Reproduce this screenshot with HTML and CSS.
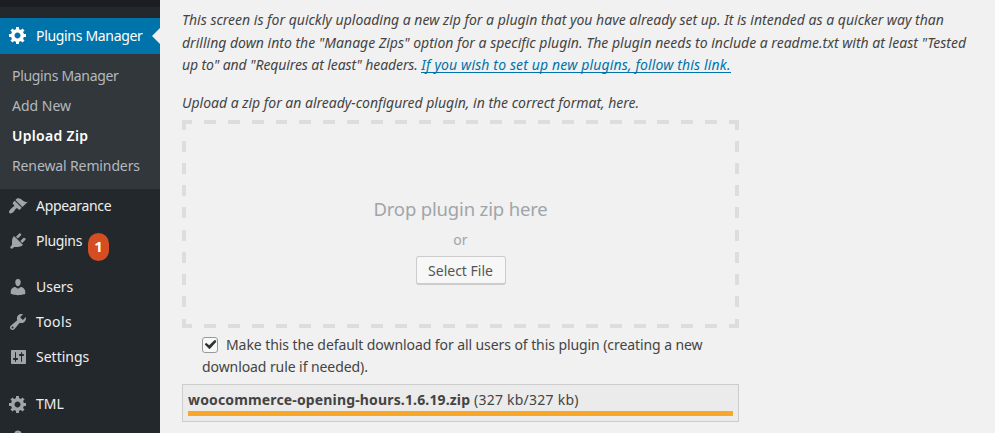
FILE: index.html
```html
<!DOCTYPE html>
<html lang="en">
<head>
<meta charset="utf-8">
<title>Upload Zip</title>
<link rel="stylesheet" href="styles.css">
</head>
<body>
<svg class="defs" width="0" height="0" aria-hidden="true">
  <symbol id="gear" viewBox="0 0 20 20"><path d="M18 12h-2.18c-.17.7-.44 1.35-.81 1.93l1.54 1.54-2.1 2.1-1.54-1.54c-.58.36-1.23.63-1.91.79V19H8v-2.18c-.68-.16-1.33-.43-1.91-.79l-1.54 1.54-2.12-2.12 1.54-1.54c-.36-.58-.63-1.23-.79-1.91H1V9.03h2.17c.16-.7.44-1.35.8-1.94L2.43 5.55l2.1-2.1 1.54 1.54c.58-.37 1.24-.64 1.93-.81V2h3v2.18c.68.16 1.33.43 1.91.79l1.54-1.54 2.12 2.12-1.54 1.54c.36.59.64 1.24.8 1.94H18V12zm-8.5 1.5c1.66 0 3-1.34 3-3s-1.34-3-3-3-3 1.34-3 3 1.34 3 3 3z"/></symbol>
</svg>
<div class="screen">
  <nav class="sidebar">
    <div class="topbar"></div>
    <a class="item current"><svg class="icon"><use href="#gear"/></svg><span class="t-pm">Plugins Manager</span></a>
    <div class="submenu">
      <a class="t-pm">Plugins Manager</a>
      <a>Add New</a>
      <a class="active">Upload Zip</a>
      <a class="t-ren">Renewal Reminders</a>
    </div>
    <a class="item"><svg class="icon" viewBox="0 0 20 20"><path d="M14.48 11.06L7.41 3.99l1.5-1.5c.5-.56 2.3-.47 3.51.32 1.21.8 1.43 1.28 2.91 2.1 1.18.64 2.45 1.26 4.45.85zm-.71.71L6.7 4.7 4.93 6.47c-.39.39-.39 1.02 0 1.41l1.06 1.06c.39.39.39 1.03 0 1.42-.6.6-1.43 1.11-2.21 1.69-.35.26-.7.53-1.01.84C1.43 14.23.4 16.08 1.4 17.07c.99 1 2.84-.03 4.18-1.36.31-.31.58-.66.85-1.02.57-.78 1.08-1.61 1.69-2.21.39-.39 1.02-.39 1.41 0l1.06 1.06c.39.39 1.02.39 1.41 0z"/></svg><span class="t-pm">Appearance</span></a>
    <a class="item"><svg class="icon" viewBox="0 0 20 20"><path d="M13.11 4.36L9.87 7.6 8 5.73l3.24-3.24c.35-.34 1.05-.2 1.56.32.52.51.66 1.21.31 1.55zm-8 1.77l.91-1.12 9.01 9.01-1.19.84c-.71.71-2.63 1.16-3.82 1.16H6.14L4.9 17.26c-.59.59-1.54.59-2.12 0-.59-.58-.59-1.53 0-2.12l1.24-1.24v-3.88c0-1.13.4-3.19 1.09-3.89zm7.26 3.97l3.24-3.24c.34-.35 1.04-.21 1.55.31.52.51.66 1.21.31 1.55l-3.24 3.25z"/></svg><span class="t-pm">Plugins</span><b class="badge">1</b></a>
    <a class="item users"><svg class="icon" viewBox="0 0 20 20"><path d="M10 9.25c-2.27 0-2.73-3.44-2.73-3.44C7 4.02 7.82 2 9.97 2c2.16 0 2.98 2.02 2.71 3.81 0 0-.41 3.44-2.68 3.44zm0 2.57L12.72 10c2.39 0 4.52 2.33 4.52 4.53v2.49s-3.65 1.13-7.24 1.13c-3.65 0-7.24-1.13-7.24-1.13v-2.49c0-2.25 1.94-4.48 4.47-4.48z"/></svg><span>Users</span></a>
    <a class="item"><svg class="icon" viewBox="0 0 20 20"><path d="M16.68 9.77c-1.34 1.34-3.3 1.67-4.95.99l-5.41 6.52c-.99.99-2.59.99-3.58 0s-.99-2.59 0-3.57l6.52-5.42c-.68-1.65-.35-3.61.99-4.95 1.28-1.28 3.12-1.62 4.72-1.06l-2.89 2.89 2.82 2.82 2.86-2.87c.53 1.58.18 3.39-1.08 4.65zM3.81 16.21c.4.39 1.04.39 1.43 0 .4-.4.4-1.04 0-1.43-.39-.4-1.03-.4-1.43 0-.39.39-.39 1.03 0 1.43z"/></svg><span class="t-tools">Tools</span></a>
    <a class="item"><svg class="icon" viewBox="0 0 20 20"><path d="M18 16V4c0-.55-.45-1-1-1H4c-.55 0-1 .45-1 1v12c0 .55.45 1 1 1h13c.55 0 1-.45 1-1zM8 11h1c.55 0 1 .45 1 1s-.45 1-1 1H8v1.5c0 .28-.22.5-.5.5s-.5-.22-.5-.5V13H6c-.55 0-1-.45-1-1s.45-1 1-1h1V5.500c0-.28.22-.5.5-.5s.5.22.5.5V11zm5-2h-1c-.55 0-1-.45-1-1s.45-1 1-1h1V5.500c0-.28.22-.5.5-.5s.5.22.5.5V7h1c.55 0 1 .45 1 1s-.45 1-1 1h-1v5.500c0 .28-.22.5-.5.5s-.5-.22-.5-.5V9z"/></svg><span>Settings</span></a>
    <a class="item tml"><svg class="icon"><use href="#gear"/></svg><span>TML</span></a>
    <a class="item"><svg class="icon" viewBox="0 0 20 20"><path fill-rule="evenodd" d="M10 1.500a3.700 3.700 0 0 1 3.700 3.700V9H15v8H5V9h1.300V5.200A3.700 3.700 0 0 1 10 1.500zm0 2.300a1.500 1.500 0 0 0-1.500 1.500V9h3V5.300A1.500 1.500 0 0 0 10 3.800z"/></svg></a>
  </nav>
  <main>
    <p class="intro">This screen is for quickly uploading a new zip for a plugin that you have already set up. It is intended as a quicker way than<br>drilling down into the "Manage Zips" option for a specific plugin. The plugin needs to include a readme.txt with at least "Tested<br><span class="headers">up to" and "Requires at least" headers. </span><a class="link">If you wish to set up new plugins, follow this link.</a></p>
    <p class="hint">Upload a zip for an already-configured plugin, in the correct format, here.</p>
    <section class="drop">
      <p class="title">Drop plugin zip here</p>
      <p class="or">or</p>
      <button class="select">Select File</button>
    </section>
    <div class="option"><span class="check"><svg viewBox="0 0 16 16"><path d="M3.500 5.500 7 8.300 13 2.500 15 2.500 15 4.600 7.500 12.800 2 7.500z"/></svg></span>Make this the default download for all users of this plugin (creating a new<br>download rule if needed).</div>
    <div class="file"><div class="name"><b>woocommerce-opening-hours.1.6.19.zip</b> <span class="size">(327 kb/327 kb)</span></div><div class="bar"></div></div>
  </main>
</div>
</body>
</html>
```
FILE: styles.css
```css
* { box-sizing: border-box; }
body { margin: 0; background: #f1f1f1; color: #444; font: 14px/22.5px "Noto Sans", sans-serif; overflow: hidden; }
p { margin: 0; }
.defs { position: absolute; }
.screen { display: flex; height: 433px; overflow: hidden; white-space: nowrap; }

.sidebar { width: 160px; flex: none; background: #23282d; color: #eee; }
.topbar { height: 18px; border-top: 7px solid #1a1e23; }
.item { display: flex; height: 35px; padding-left: 8px; align-items: center; }
.icon { width: 20px; height: 20px; margin: 0 8px 2px 0; fill: #a0a5aa; flex: none; }
.current { position: relative; height: 36px; background: #0073aa; color: #fff; }
.current .icon { fill: #fff; }
.current::after { content: ""; position: absolute; right: 0; top: 10px; border: 8px solid transparent; border-right-color: #f1f1f1; border-left: 0; }
.submenu { display: flex; flex-direction: column; height: 135px; padding: 7px 0 0 12px; background: #32373c; color: #b4b9be; line-height: 30px; }
.active { color: #fff; font-weight: 600; letter-spacing: .3px; }
.t-pm { letter-spacing: -.32px; }
.t-ren { letter-spacing: -.12px; }
.t-tools { letter-spacing: .4px; }
.users { margin-top: 11px; }
.tml { margin-top: 12px; }
.badge { width: 21px; height: 28px; margin: 11px 0 0 6px; border-radius: 10.5px; background: #d54e21; color: #fff; text-align: center; font-size: 15px; line-height: 27px; flex: none; }

main { flex: 1; padding: 9px 0 0 22px; }
.intro, .hint { font-style: italic; }
.hint { margin-top: 15px; letter-spacing: -.01px; }
.headers { letter-spacing: -.1px; }
.link { color: #0073aa; letter-spacing: .14px; background: linear-gradient(#0073aa, #0073aa) 0 calc(100% - 1px) / 100% 1px no-repeat; }
.drop {
  --h: repeating-linear-gradient(90deg, #ddd 0 10px, transparent 10px 21.930px, #ddd 21.930px 23.870px);
  --v: repeating-linear-gradient(180deg, #ddd 0 9.500px, transparent 9.500px 20.600px, #ddd 20.600px 22.240px);
  display: flex; flex-direction: column; align-items: center;
  width: 557px; height: 208px; margin-top: 6px; padding-top: 74px;
  background: var(--h) top / 100% 4px no-repeat, var(--h) bottom / 100% 4px no-repeat, var(--v) left / 4px 100% no-repeat, var(--v) right / 4px 100% no-repeat;
}
.title { font-size: 18.500px; line-height: 30px; letter-spacing: -.16px; color: #a0a5aa; }
.or { margin-top: 5px; color: #a0a5aa; }
.select { width: 90px; height: 29px; margin-top: 4px; padding: 3px 0 0; border: 1px solid #ccc; border-bottom-width: 2px; border-radius: 3px; background: #f7f7f7; color: #555; font: inherit; }
.option { margin-top: 6px; padding-left: 20px; line-height: 22px; letter-spacing: -.08px; }
.check { display: inline-block; width: 16px; height: 16px; margin-right: 8px; border: 1px solid #999; border-radius: 3px; background: #f8f8f8; vertical-align: -3px; }
.check svg { display: block; width: 14px; height: 14px; fill: #2e3436; }
.file { width: 557px; height: 38px; margin-top: 6px; padding: 4px 5px; border: 1px solid #ccc; background: #ebebeb; }
.name { height: 22px; line-height: 22px; letter-spacing: .15px; }
.size { letter-spacing: .24px; }
.bar { height: 5px; background: #f9a729; }
```
